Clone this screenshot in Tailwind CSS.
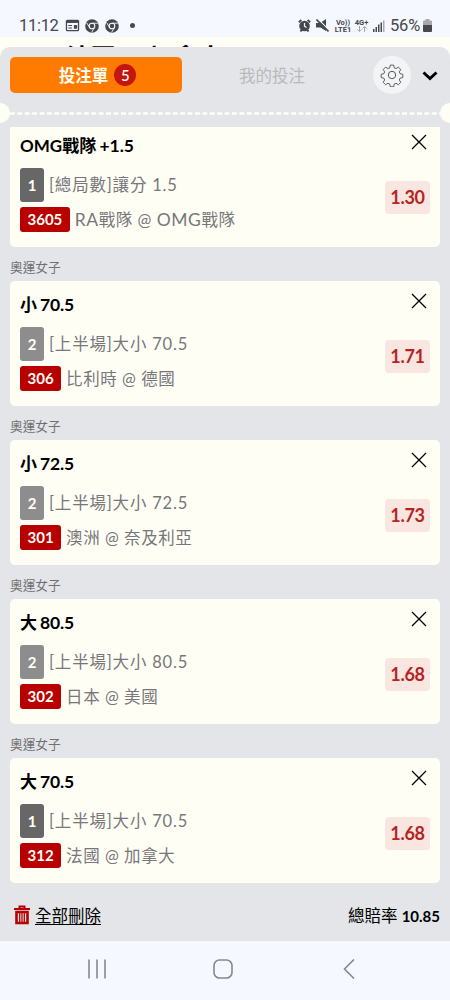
<!DOCTYPE html>
<html lang="zh-Hant">
<head>
  <meta charset="utf-8">
  <meta name="viewport" content="width=device-width, initial-scale=1">
  <title>投注單</title>
  <script src="https://cdn.jsdelivr.net/npm/@tailwindcss/browser@4"></script>
</head>
<body class="bg-[#fffef5]">
<div class="flex h-[1000px] w-[450px] flex-col overflow-hidden font-['Lato','Noto_Sans_CJK_TC',sans-serif] text-black">

  <!-- status bar -->
  <header class="flex h-[37px] shrink-0 items-end justify-between bg-[#f5f9ff] pr-[18px] pl-[19px] pb-[1px] font-['Roboto',sans-serif] text-[#46484d]">
    <div class="flex h-[21px] items-center">
      <span class="w-[46px] pt-[2px] text-[16.5px] leading-none tracking-[-.3px]">11:12</span>
      <svg class="h-[13px] w-[15px]" viewBox="0 0 15 14" fill="none" stroke="currentColor" stroke-width="1.4"><rect x="1" y="1.5" width="13" height="11" rx="1"/><path d="M1 3h13" stroke-width="2.5"/><path d="M3 7h4M3 9.7h4" stroke-width="1.2"/><path d="M9 6.5h3.5v4H9z" fill="currentColor" stroke="none"/></svg>
      <svg class="ml-[5px] h-[14px] w-[14px]" viewBox="0 0 14 14"><circle cx="7" cy="7" r="6.8" fill="currentColor"/><g fill="none" stroke="#f5f9ff"><circle cx="7" cy="7" r="2.8" stroke-width="1.1"/><path d="M7 4.2h5.8M4.5 8.4 1.6 3.6M9.4 8.4l-2.8 5" stroke-width=".9"/></g></svg>
      <svg class="ml-[6px] h-[14px] w-[14px]" viewBox="0 0 14 14"><circle cx="7" cy="7" r="6.8" fill="currentColor"/><g fill="none" stroke="#f5f9ff"><circle cx="7" cy="7" r="2.8" stroke-width="1.1"/><path d="M7 4.2h5.8M4.5 8.4 1.6 3.6M9.4 8.4l-2.8 5" stroke-width=".9"/></g></svg>
      <span class="ml-[11px] h-[5px] w-[5px] rounded-full bg-current"></span>
    </div>
    <div class="flex h-[21px] items-center">
      <svg class="h-[13px] w-[13px]" viewBox="0 0 13 13"><circle cx="6.5" cy="7" r="5.3" fill="currentColor"/><path d="M.8 3.2 3.4 1M12.2 3.2 9.6 1M2.5 12.5l1.5-2M10.5 12.5l-1.5-2" stroke="currentColor" stroke-width="1.9"/><path d="M6.5 4v3.2l2 1.3" stroke="#f5f9ff" stroke-width="1.2" fill="none"/></svg>
      <svg class="ml-[5px] h-[13px] w-[13px]" viewBox="0 0 13 13"><path d="M0 4h4l6-4v12L4.500 8.500H0z" fill="currentColor"/><path d="M2 0l11 11" stroke="#f5f9ff" stroke-width="1.200"/><path d="M.5.5l12 12" stroke="currentColor" stroke-width="1.600"/></svg>
      <span class="ml-[5px] w-[18px] text-center text-[7.5px] leading-[7px] font-bold">Vo))<br>LTE1</span>
      <span class="ml-[2px] flex w-[15px] flex-col items-center text-[7.5px] leading-[7px] font-bold">4G+
        <svg class="h-[6px] w-[10px]" viewBox="0 0 10 6" fill="none" stroke="#a5a8ad" stroke-width="1"><path d="M2.500 0v5.500M.5 3.500l2 2 2-2M7.500 6V.5M5.500 2.500l2-2 2 2"/></svg>
      </span>
      <svg class="ml-[4px] h-[12px] w-[12px]" viewBox="0 0 12 12" fill="currentColor"><path d="M0 9h1.500v3H0zM2.500 7H4v5H2.500zM5 4.500h1.500V12H5zM7.500 2.500H9V12H7.500z"/><path d="M10 .5h1.500V12H10z" opacity=".45"/></svg>
      <span class="ml-[5px] w-[31px] pt-[2px] text-[16.5px] leading-none tracking-[-.2px]">56%</span>
      <svg class="ml-[2px] h-[13px] w-[9px]" viewBox="0 0 9 13"><path d="M2.500 0h4v1.500H8a1 1 0 0 1 1 1V7H0V2.500a1 1 0 0 1 1-1h1.500z" fill="#a5a8ad"/><path d="M0 6h9v6a1 1 0 0 1-1 1H1a1 1 0 0 1-1-1z" fill="currentColor"/></svg>
    </div>
  </header>

  <!-- page behind the sheet -->
  <div class="flex h-[10px] shrink-0 overflow-hidden pt-[5px] pl-[66px]">
    <p class="text-[24.8px] leading-[32px] font-bold whitespace-nowrap">法國 @ 加拿大</p>
  </div>

  <!-- bet slip sheet -->
  <main class="flex h-[894px] shrink-0 flex-col rounded-t-[10px] bg-[#e3e5e8]">
    <div class="flex h-[56px] shrink-0 items-center pr-[11px] pl-[10px]">
      <button class="flex h-[36px] w-[172px] items-center justify-center gap-[6px] rounded-[5px] bg-[#ff7b00] pl-[3px] text-[16.5px] font-bold text-[#fffef5]">
        <span class="pt-[2px]">投注單</span>
        <span class="flex h-[22px] w-[22px] items-center justify-center rounded-full bg-[#c4160f] text-[15px] font-medium">5</span>
      </button>
      <button class="w-[180px] pt-[2px] text-center text-[16.5px] text-[#b8babd]">我的投注</button>
      <button class="ml-[11px] flex h-[38px] w-[38px] items-center justify-center rounded-full bg-[#f3f4f6]">
        <svg class="h-6 w-6" viewBox="0 0 24 24" fill="none" stroke="#555" stroke-width="1"><circle cx="12" cy="12" r="3.700"/><path d="M10.200 1.500h3.600l.6 2.900 1.900.8 2.500-1.600 2.600 2.600-1.600 2.500.8 1.900 2.900.6v3.600l-2.900.6-.8 1.900 1.600 2.500-2.600 2.600-2.500-1.600-1.900.8-.6 2.900h-3.600l-.6-2.900-1.900-.8-2.500 1.600-2.600-2.600 1.600-2.500-.8-1.900-2.900-.6v-3.600l2.900-.6.8-1.900-1.600-2.500 2.600-2.600 2.500 1.600 1.900-.8z" stroke-linejoin="round" transform="translate(.7 .7) scale(.94)"/></svg>
      </button>
      <svg class="mt-[2px] ml-[11px] h-[10px] w-[16px]" viewBox="0 0 16 10" fill="none" stroke="#000" stroke-width="3"><path d="M1.500 1.500 8 7.500l6.500-6"/></svg>
    </div>

    <!-- ticket perforation -->
    <div class="flex h-[24px] shrink-0 items-start justify-between overflow-hidden">
      <span class="-ml-[10px] h-5 w-5 rounded-full bg-[#fffef5]"></span>
      <svg class="mt-[9px] h-[3px] w-[430px]" viewBox="0 0 430 3"><path d="M0 1.500h430" stroke="#fffef5" stroke-width="2.400" stroke-dasharray="4.800 2.600"/></svg>
      <span class="-mr-[10px] h-5 w-5 rounded-full bg-[#fffef5]"></span>
    </div>

    <div class="h-[765px] shrink-0 overflow-hidden px-[10px]">
      <section class="-mt-[5px] flex h-[124.500px] justify-between rounded-[5px] bg-[#fffef5] px-[10px]">
        <div class="flex flex-col">
          <h3 class="mt-[12px] h-[24px] text-[17px] leading-[24px] font-bold">OMG戰隊<span class="-ml-[1px] text-[17.5px]"> +1.5</span></h3>
          <p class="mt-[10px] flex h-[34px] items-center gap-[5px] text-[16.5px] tracking-[.8px] text-[#77777a]"><span class="flex h-[34px] w-[24px] items-center justify-center rounded-[3px] bg-[#676767] text-[15px] font-bold tracking-normal text-[#fffef5]">1</span><span class="pt-[1px]">[總局數]讓分 1.5</span></p>
          <p class="mt-[5px] flex h-[25px] items-center gap-[5px] text-[16.5px] tracking-[.55px] text-[#77777a]"><span class="flex h-[25px] items-center rounded-[3px] bg-[#b80000] px-[7.5px] text-[15px] font-bold tracking-normal text-[#fffef5]">3605</span><span class="pt-[2px]"><span class="text-[17.5px]">RA</span>戰隊 @ <span class="text-[17.5px]">OMG</span>戰隊</span></p>
        </div>
        <div class="flex flex-col items-end">
          <svg class="mt-[12px] mr-[3px] h-[16px] w-[16px]" viewBox="0 0 16 16" stroke="#000" stroke-width="1.300"><path d="m1 1 14 14M15 1 1 15"/></svg>
          <span class="mt-[31px] flex h-[33px] w-[45px] items-center justify-center rounded-[4px] bg-[#f9e6e1] text-[18px] tracking-[-.3px] font-bold text-[#b52525]">1.30</span>
        </div>
      </section>

      <h2 class="flex h-[34.5px] items-center pt-[7px] text-[12.7px] text-[#6f7073]">奧運女子</h2>
      <section class="flex h-[124.5px] justify-between rounded-[5px] bg-[#fffef5] px-[10px]">
        <div class="flex flex-col">
          <h3 class="mt-[12px] h-[24px] text-[17px] leading-[24px] font-bold">小<span class="-ml-[1px] text-[17.5px] tracking-[-.2px]"> 70.5</span></h3>
          <p class="mt-[10px] flex h-[34px] items-center gap-[5px] text-[16.5px] tracking-[.8px] text-[#77777a]"><span class="flex h-[34px] w-[24px] items-center justify-center rounded-[3px] bg-[#8d8d8d] text-[15px] font-bold tracking-normal text-[#fffef5]">2</span><span class="pt-[1px]">[上半場]大小 70.5</span></p>
          <p class="mt-[5px] flex h-[25px] items-center gap-[5px] text-[16.5px] tracking-[.55px] text-[#77777a]"><span class="flex h-[25px] items-center rounded-[3px] bg-[#b80000] px-[7.5px] text-[15px] font-bold tracking-normal text-[#fffef5]">306</span><span class="pt-[2px]">比利時 @ 德國</span></p>
        </div>
        <div class="flex flex-col items-end">
          <svg class="mt-[12px] mr-[3px] h-[16px] w-[16px]" viewBox="0 0 16 16" stroke="#000" stroke-width="1.300"><path d="m1 1 14 14M15 1 1 15"/></svg>
          <span class="mt-[31px] flex h-[33px] w-[45px] items-center justify-center rounded-[4px] bg-[#f9e6e1] text-[18px] tracking-[-.3px] font-bold text-[#b52525]">1.71</span>
        </div>
      </section>

      <h2 class="flex h-[34.5px] items-center pt-[7px] text-[12.7px] text-[#6f7073]">奧運女子</h2>
      <section class="flex h-[124.5px] justify-between rounded-[5px] bg-[#fffef5] px-[10px]">
        <div class="flex flex-col">
          <h3 class="mt-[12px] h-[24px] text-[17px] leading-[24px] font-bold">小<span class="-ml-[1px] text-[17.5px] tracking-[-.2px]"> 72.5</span></h3>
          <p class="mt-[10px] flex h-[34px] items-center gap-[5px] text-[16.5px] tracking-[.8px] text-[#77777a]"><span class="flex h-[34px] w-[24px] items-center justify-center rounded-[3px] bg-[#8d8d8d] text-[15px] font-bold tracking-normal text-[#fffef5]">2</span><span class="pt-[1px]">[上半場]大小 72.5</span></p>
          <p class="mt-[5px] flex h-[25px] items-center gap-[5px] text-[16.5px] tracking-[.55px] text-[#77777a]"><span class="flex h-[25px] items-center rounded-[3px] bg-[#b80000] px-[7.5px] text-[15px] font-bold tracking-normal text-[#fffef5]">301</span><span class="pt-[2px]">澳洲 @ 奈及利亞</span></p>
        </div>
        <div class="flex flex-col items-end">
          <svg class="mt-[12px] mr-[3px] h-[16px] w-[16px]" viewBox="0 0 16 16" stroke="#000" stroke-width="1.300"><path d="m1 1 14 14M15 1 1 15"/></svg>
          <span class="mt-[31px] flex h-[33px] w-[45px] items-center justify-center rounded-[4px] bg-[#f9e6e1] text-[18px] tracking-[-.3px] font-bold text-[#b52525]">1.73</span>
        </div>
      </section>

      <h2 class="flex h-[34.5px] items-center pt-[7px] text-[12.7px] text-[#6f7073]">奧運女子</h2>
      <section class="flex h-[124.5px] justify-between rounded-[5px] bg-[#fffef5] px-[10px]">
        <div class="flex flex-col">
          <h3 class="mt-[12px] h-[24px] text-[17px] leading-[24px] font-bold">大<span class="-ml-[1px] text-[17.5px] tracking-[-.2px]"> 80.5</span></h3>
          <p class="mt-[10px] flex h-[34px] items-center gap-[5px] text-[16.5px] tracking-[.8px] text-[#77777a]"><span class="flex h-[34px] w-[24px] items-center justify-center rounded-[3px] bg-[#8d8d8d] text-[15px] font-bold tracking-normal text-[#fffef5]">2</span><span class="pt-[1px]">[上半場]大小 80.5</span></p>
          <p class="mt-[5px] flex h-[25px] items-center gap-[5px] text-[16.5px] tracking-[.55px] text-[#77777a]"><span class="flex h-[25px] items-center rounded-[3px] bg-[#b80000] px-[7.5px] text-[15px] font-bold tracking-normal text-[#fffef5]">302</span><span class="pt-[2px]">日本 @ 美國</span></p>
        </div>
        <div class="flex flex-col items-end">
          <svg class="mt-[12px] mr-[3px] h-[16px] w-[16px]" viewBox="0 0 16 16" stroke="#000" stroke-width="1.300"><path d="m1 1 14 14M15 1 1 15"/></svg>
          <span class="mt-[31px] flex h-[33px] w-[45px] items-center justify-center rounded-[4px] bg-[#f9e6e1] text-[18px] tracking-[-.3px] font-bold text-[#b52525]">1.68</span>
        </div>
      </section>

      <h2 class="flex h-[34.5px] items-center pt-[7px] text-[12.7px] text-[#6f7073]">奧運女子</h2>
      <section class="flex h-[124.5px] justify-between rounded-[5px] bg-[#fffef5] px-[10px]">
        <div class="flex flex-col">
          <h3 class="mt-[12px] h-[24px] text-[17px] leading-[24px] font-bold">大<span class="-ml-[1px] text-[17.5px] tracking-[-.2px]"> 70.5</span></h3>
          <p class="mt-[10px] flex h-[34px] items-center gap-[5px] text-[16.5px] tracking-[.8px] text-[#77777a]"><span class="flex h-[34px] w-[24px] items-center justify-center rounded-[3px] bg-[#676767] text-[15px] font-bold tracking-normal text-[#fffef5]">1</span><span class="pt-[1px]">[上半場]大小 70.5</span></p>
          <p class="mt-[5px] flex h-[25px] items-center gap-[5px] text-[16.5px] tracking-[.55px] text-[#77777a]"><span class="flex h-[25px] items-center rounded-[3px] bg-[#b80000] px-[7.5px] text-[15px] font-bold tracking-normal text-[#fffef5]">312</span><span class="pt-[2px]">法國 @ 加拿大</span></p>
        </div>
        <div class="flex flex-col items-end">
          <svg class="mt-[12px] mr-[3px] h-[16px] w-[16px]" viewBox="0 0 16 16" stroke="#000" stroke-width="1.300"><path d="m1 1 14 14M15 1 1 15"/></svg>
          <span class="mt-[31px] flex h-[33px] w-[45px] items-center justify-center rounded-[4px] bg-[#f9e6e1] text-[18px] tracking-[-.3px] font-bold text-[#b52525]">1.68</span>
        </div>
      </section>
    </div>

    <div class="flex grow items-center justify-between pr-[10px] pb-[1px] pl-[14px]">
      <a href="#" class="flex items-center gap-[5px] text-[16.5px] underline underline-offset-2">
        <svg class="-mt-[2px] h-[20px] w-[16px]" viewBox="0 0 16 20" fill="none" stroke="#b80000"><path d="M0 4h16M5.500 3.500v-2h5v2" stroke-width="2"/><path d="M2.500 7v11h11V7z" stroke-width="2.600"/><path d="M5.700 7v10M8 7v10M10.300 7v10" stroke-width="1.300"/></svg>
        全部刪除
      </a>
      <p class="text-[16.5px]">總賠率 <b class="text-[15px]">10.85</b></p>
    </div>
  </main>

  <!-- system navigation -->
  <nav class="flex h-[59px] shrink-0 items-center bg-[#f5f9ff] pb-[4px] pl-[87px]">
    <svg class="h-[20px] w-[20px]" viewBox="0 0 20 20" stroke="#85888e" stroke-width="1.600"><path d="M2 .5v19M10 .5v19M18 .5v19"/></svg>
    <svg class="ml-[106px] h-[20px] w-[20px]" viewBox="0 0 20 20" fill="none" stroke="#85888e" stroke-width="1.600"><rect x="1" y="1" width="18" height="18" rx="5.500"/></svg>
    <svg class="ml-[110px] h-[20px] w-[12px]" viewBox="0 0 12 20" fill="none" stroke="#85888e" stroke-width="1.600"><path d="M11 .5 1.500 10l9.500 9.500"/></svg>
  </nav>
</div>
</body>
</html>
